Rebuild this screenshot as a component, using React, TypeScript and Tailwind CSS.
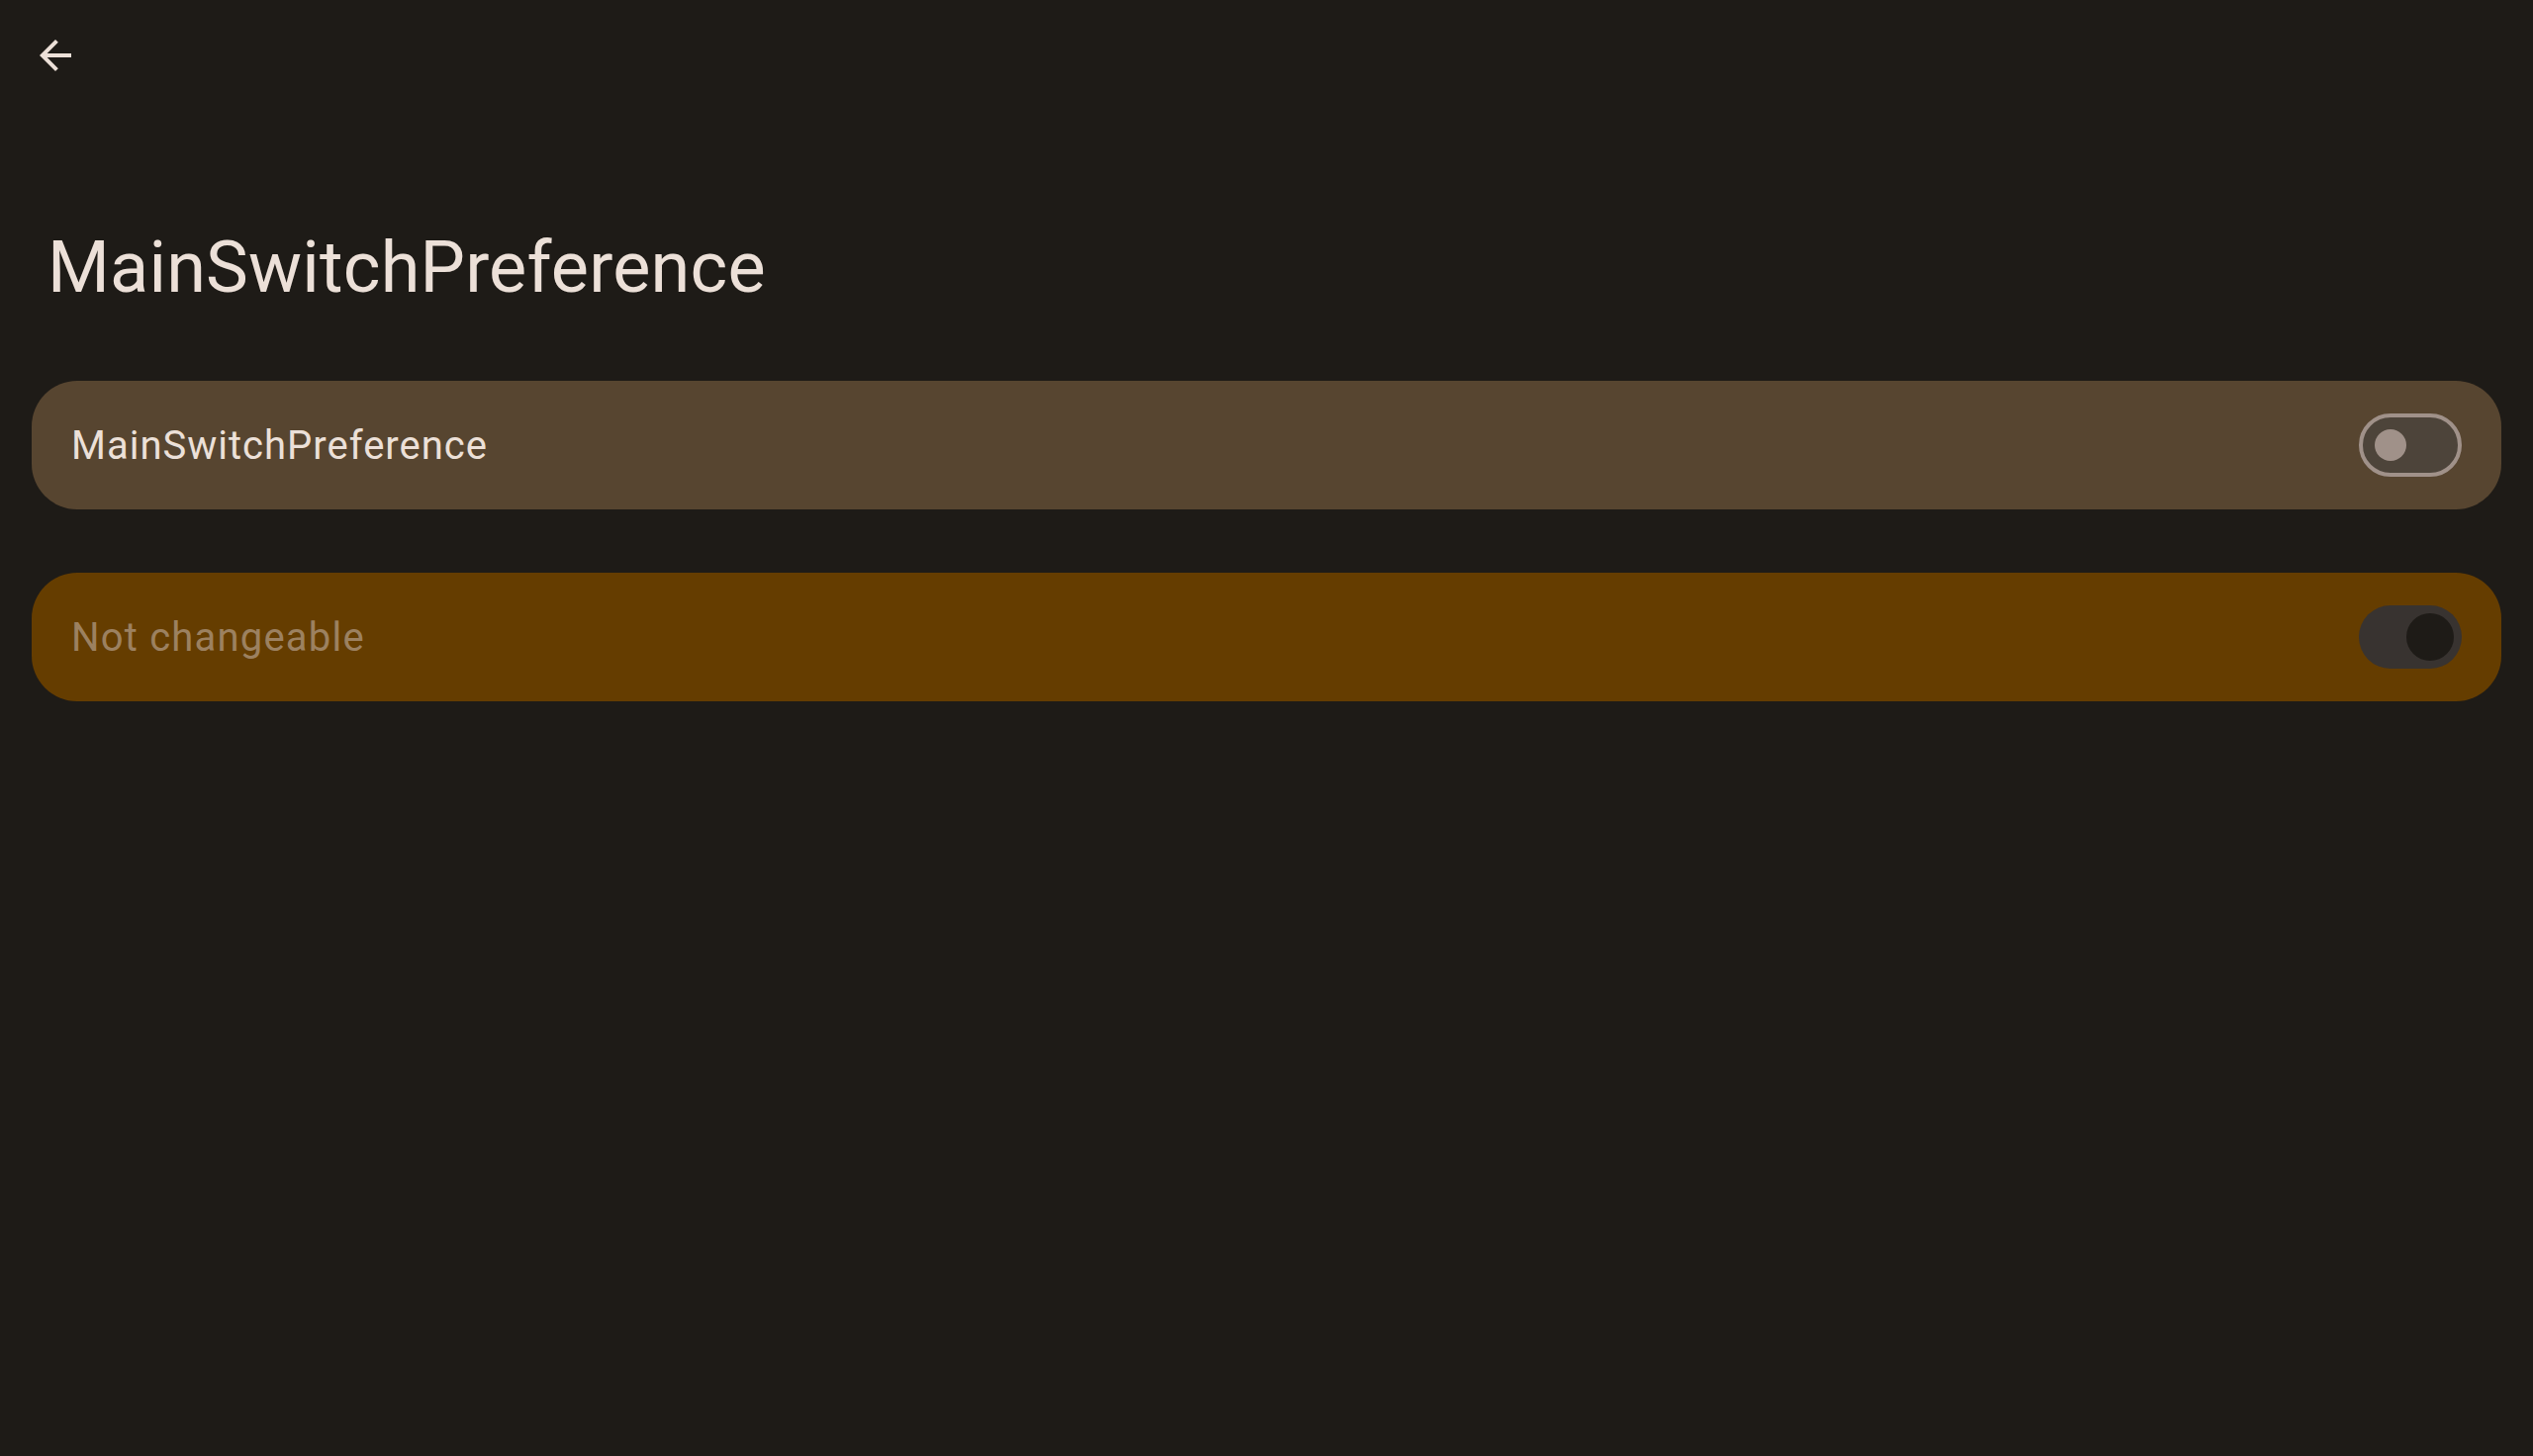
import React from 'react';

function BackArrow() {
    return (
        <svg viewBox="0 0 24 24" className="w-[48px] h-[48px]" fill="#ece0d8">
            <path d="M20 11H7.83l5.59-5.59L12 4l-8 8 8 8 1.41-1.41L7.83 13H20v-2z" />
        </svg>
    );
}

function SwitchOff() {
    return (
        <div className="w-[104px] h-[64px] rounded-full border-[4px] border-[#a09189] bg-[#4d443a] flex items-center pl-[12px] box-border">
            <div className="w-[32px] h-[32px] rounded-full bg-[#a09189]" />
        </div>
    );
}

function SwitchDisabled() {
    return (
        <div className="w-[104px] h-[64px] rounded-full bg-[#383330] flex items-center justify-end pr-[8px]">
            <div className="w-[48px] h-[48px] rounded-full bg-[#1e1b17]" />
        </div>
    );
}

export default function App() {
    return (
        <div
            className="min-h-screen w-full bg-[#1e1b17] text-[#ece0d8]"
            style={{ fontFamily: 'Roboto, "Noto Sans", sans-serif' }}
        >
            {/* Toolbar */}
            <div className="pt-[32px] pl-[32px] h-[80px]">
                <button type="button" className="w-[48px] h-[48px] flex items-center justify-center">
                    <BackArrow />
                </button>
            </div>

            {/* Large title */}
            <h1 className="mt-[155px] pl-[48px] text-[72px] leading-[72px] font-normal tracking-[0.2px] text-[#ece0d8]">
                MainSwitchPreference
            </h1>

            {/* Preferences */}
            <div className="mt-[78px] px-[32px] flex flex-col gap-[64px]">
                <div className="h-[130px] rounded-[46px] bg-[#574530] pl-[40px] pr-[40px] flex items-center justify-between">
                    <span className="pt-[2px] text-[40px] leading-[48px] tracking-[1px] text-[#ece0d8]">MainSwitchPreference</span>
                    <SwitchOff />
                </div>
                <div className="h-[130px] rounded-[46px] bg-[#653d00] pl-[40px] pr-[40px] flex items-center justify-between">
                    <span className="pt-[2px] text-[40px] leading-[48px] tracking-[1.2px] text-[#9c8160]">Not changeable</span>
                    <SwitchDisabled />
                </div>
            </div>
        </div>
    );
}
